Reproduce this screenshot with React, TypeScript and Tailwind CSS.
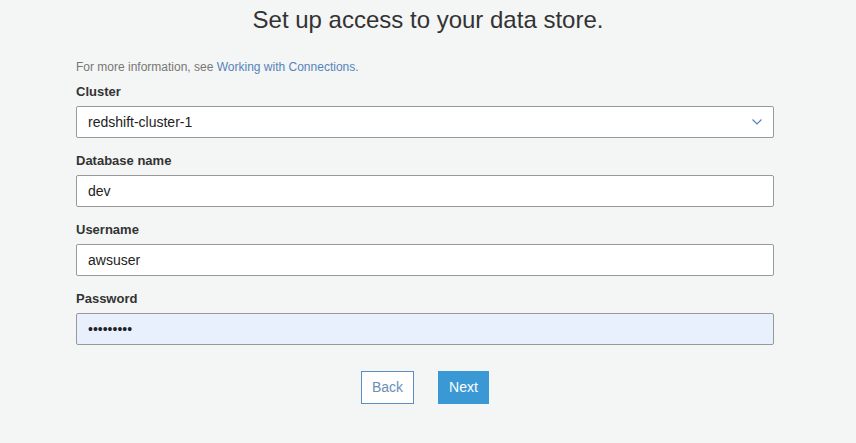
import React from "react";

function Field({ label, value, type = "text", bg = "bg-white" }: { label: string; value: string; type?: string; bg?: string }) {
  return (
    <div className="flex flex-col">
      <label className="h-[19px] text-[13px] font-bold leading-[19px] text-[#333]">{label}</label>
      <div className="h-[5px]" />
      <input
        readOnly
        type={type}
        value={value}
        className={`h-[32px] w-full rounded-[2px] border border-[#999] ${bg} px-[11px] text-[14px] text-[#222] outline-none`}
      />
    </div>
  );
}

export default function App() {
  return (
    <div className="h-[443px] w-[856px] bg-[#f4f5f5] font-['Liberation_Sans',Arial,sans-serif]">
      <div className="pt-[5px] text-center text-[24px] leading-[30px] text-[#333]">Set up access to your data store.</div>
      <div className="ml-[76px] mr-[82px] mt-[24px] flex flex-col">
        <div className="h-[16px] text-[12px] leading-[16px] text-[#777]">
          For more information, see <span className="text-[#5584ba]">Working with Connections</span>.
        </div>
        <div className="h-[7px]" />
        <div className="flex flex-col">
          <label className="h-[19px] text-[13px] font-bold leading-[19px] text-[#333]">Cluster</label>
          <div className="h-[5px]" />
          <div className="flex h-[32px] items-center justify-between rounded-[2px] border border-[#999] bg-white pl-[11px] pr-[10px] text-[14px] text-[#222]">
            <span>redshift-cluster-1</span>
            <svg width="12" height="8" viewBox="0 0 12 8" fill="none">
              <path d="M1.5 1.5 L6 6 L10.5 1.5" stroke="#5584ba" strokeWidth="1.2" />
            </svg>
          </div>
        </div>
        <div className="h-[13px]" />
        <Field label="Database name" value="dev" />
        <div className="h-[13px]" />
        <Field label="Username" value="awsuser" />
        <div className="h-[13px]" />
        <Field label="Password" value="123456789" type="password" bg="bg-[#e8f0fe]" />
        <div className="mt-[26px] flex justify-center gap-[24px]">
          <button className="h-[33px] w-[53px] border border-[#5b8ec4] bg-white text-[14px] text-[#6a8fb8]">Back</button>
          <button className="h-[33px] w-[51px] bg-[#3a98d4] text-[14px] text-white">Next</button>
        </div>
      </div>
    </div>
  );
}
